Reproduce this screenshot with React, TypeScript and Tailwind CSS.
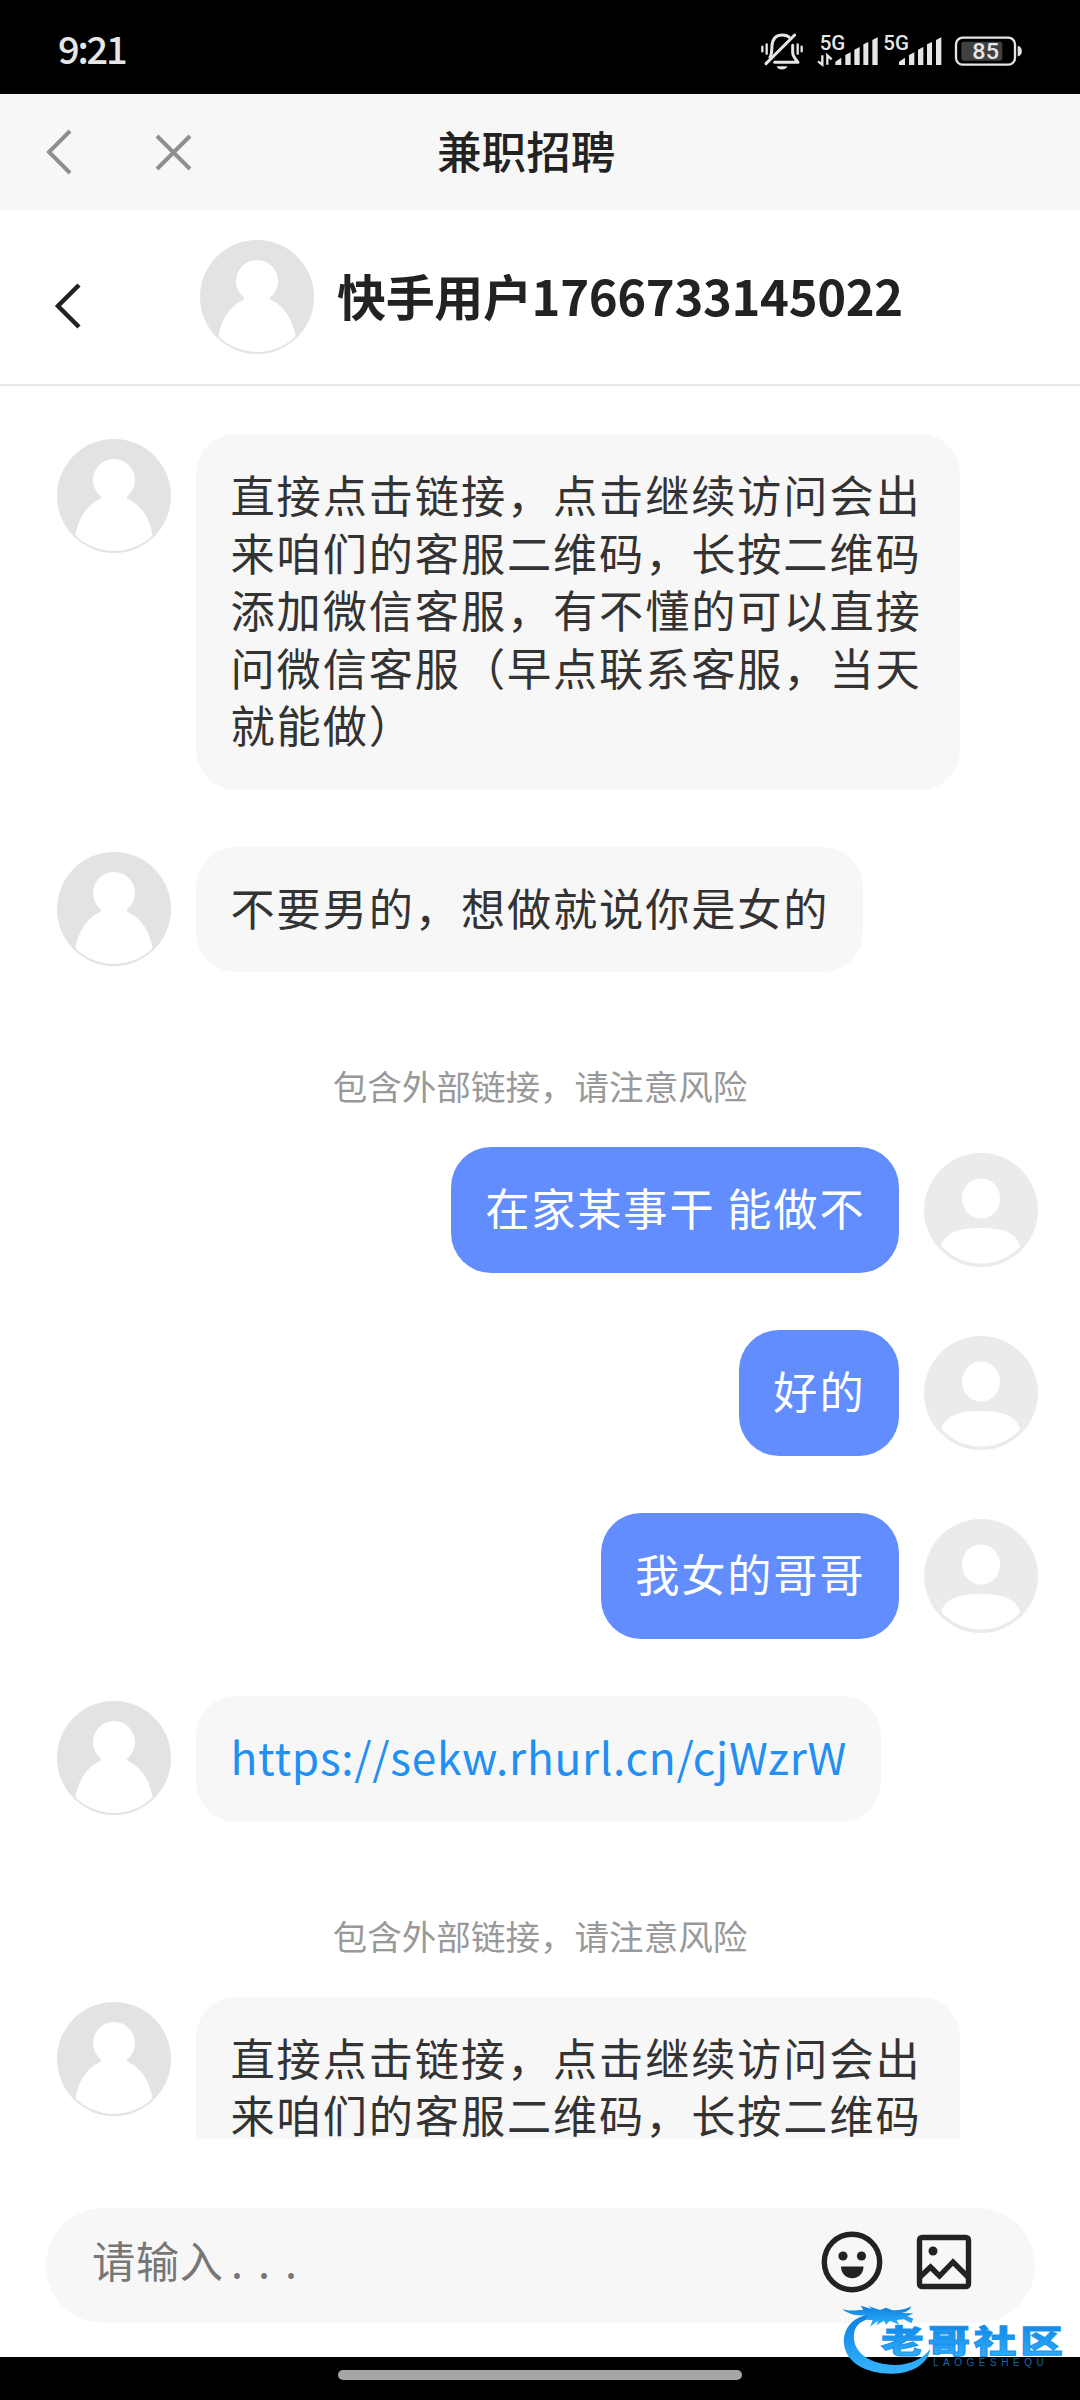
import React from 'react';

type Message =
  | { id: number; kind: 'received'; text: string; link?: boolean }
  | { id: number; kind: 'sent'; text: string }
  | { id: number; kind: 'notice'; text: string };

const LONG_TEXT =
  '直接点击链接，点击继续访问会出来咱们的客服二维码，长按二维码添加微信客服，有不懂的可以直接问微信客服（早点联系客服，当天就能做）';

const messages: Message[] = [
  { id: 1, kind: 'received', text: LONG_TEXT },
  { id: 2, kind: 'received', text: '不要男的，想做就说你是女的' },
  { id: 3, kind: 'notice', text: '包含外部链接，请注意风险' },
  { id: 4, kind: 'sent', text: '在家某事干 能做不' },
  { id: 5, kind: 'sent', text: '好的' },
  { id: 6, kind: 'sent', text: '我女的哥哥' },
  { id: 7, kind: 'received', text: 'https://sekw.rhurl.cn/cjWzrW', link: true },
  { id: 8, kind: 'notice', text: '包含外部链接，请注意风险' },
  { id: 9, kind: 'received', text: LONG_TEXT },
];

const PeerAvatar = () => (
  <svg className="h-[114px] w-[114px] shrink-0" viewBox="0 0 114 114">
    <clipPath id="peer">
      <circle cx="57" cy="57" r="55" />
    </clipPath>
    <circle cx="57" cy="57" r="57" fill="#e3e3e3" />
    <g clipPath="url(#peer)" fill="#fff">
      <circle cx="57" cy="41" r="21" />
      <path d="M43 56 Q45 59 43 60 C30 66 21 79 18 98 V114 H96 V98 C93 79 84 66 71 60 Q69 59 71 56 Z" />
    </g>
  </svg>
);

const SelfAvatar = () => (
  <svg className="h-[114px] w-[114px] shrink-0" viewBox="0 0 114 114">
    <clipPath id="self">
      <circle cx="57" cy="57" r="53.5" />
    </clipPath>
    <circle cx="57" cy="57" r="57" fill="#ebebeb" />
    <g clipPath="url(#self)" fill="#fff">
      <ellipse cx="57" cy="45.5" rx="19" ry="20" />
      <path d="M17 93 C21 80 34 75 57 75 C80 75 92 80 96 93 V114 H17 Z" />
    </g>
  </svg>
);

const SignalBars = ({ x }: { x: number }) => (
  <g fill="#e6e6e6">
    <path d={`M${x} 165 V155 L${x + 18} 143 V165 Z`} />
    <path d={`M${x + 30} 165 V135 L${x + 46} 127 V165 Z`} />
    <path d={`M${x + 57} 165 V119 L${x + 73} 111 V165 Z`} />
    <path d={`M${x + 84} 165 V103 L${x + 99} 96 V165 Z`} />
    <path d={`M${x + 111} 165 V90 L${x + 127} 82 V165 Z`} />
  </g>
);

const StatusIcons = () => (
  <svg className="h-[90px] w-[340px]" viewBox="0 0 1020 270">
    <g fill="none" stroke="#e6e6e6" strokeWidth="9" strokeLinecap="round">
      <path d="M78 161 L164 75" />
      <path d="M90 142 C96 132 95 122 96 107 C98 84 109 75 127 75 C136 75 142 77 147 81" />
      <path d="M104 157 H174 C164 146 158 137 158 127 V106" strokeLinejoin="round" />
      <path d="M67 110 V124 M80 103 V131 M173 103 V131 M185 110 V124" strokeWidth="7" />
    </g>
    <path d="M110 169 H142 C138 182 114 182 110 169 Z" fill="#e6e6e6" />
    <g
      fill="#e6e6e6"
      className="font-['Roboto','Noto_Sans_CJK_SC',sans-serif] text-[60px] font-medium"
    >
      <text x="239" y="119" textLength="77" lengthAdjust="spacingAndGlyphs">
        5G
      </text>
      <text x="430" y="119" textLength="77" lengthAdjust="spacingAndGlyphs">
        5G
      </text>
    </g>
    <path
      d="M247 136 V164 L234 154 M262 164 V136 L275 148"
      fill="none"
      stroke="#e6e6e6"
      strokeWidth="7"
    />
    <SignalBars x={286} />
    <SignalBars x={477} />
    <rect x="648" y="83" width="177" height="81" rx="20" fill="none" stroke="#e6e6e6" strokeWidth="7" />
    <rect x="664" y="95" width="123" height="57" rx="8" fill="#404040" />
    <path d="M834 109 C848 109 848 138 834 138 Z" fill="#e6e6e6" stroke="#e6e6e6" strokeWidth="2" />
    <text
      x="697"
      y="148"
      textLength="80"
      lengthAdjust="spacingAndGlyphs"
      fill="#e6e6e6"
      className="font-['Roboto','Noto_Sans_CJK_SC',sans-serif] text-[68px] font-medium"
    >
      85
    </text>
  </svg>
);

const Bubble = ({ message }: { message: Message }) => {
  if (message.kind === 'notice') {
    return (
      <p className="mb-[30px] h-[88px] pt-[27px] text-center text-[34.56px] leading-[58px] text-[#999]">
        {message.text}
      </p>
    );
  }

  if (message.kind === 'sent') {
    return (
      <div className="mb-[57px] flex justify-end gap-[25px] pr-[42px]">
        <div className="h-[126px] rounded-[40px] bg-[#628dff] pt-[32px] pr-[33.5px] pl-[34.5px] text-[44.2px] leading-[57.5px] tracking-[1.88px] whitespace-nowrap text-white">
          {message.text}
        </div>
        <div className="pt-[6px]">
          <SelfAvatar />
        </div>
      </div>
    );
  }

  return (
    <div className="mb-[57px] flex gap-[25px] pl-[57px]">
      <div className="pt-[5px]">
        <PeerAvatar />
      </div>
      <div className="max-w-[764px] rounded-[40px] bg-[#f7f7f7] pt-[32px] pr-[34px] pb-[36px] pl-[34.56px] text-[44.2px] leading-[57.5px] tracking-[1.88px] break-all text-[#333]">
        {message.link ? (
          <a className="block h-[57.5px] tracking-[0.7px] whitespace-nowrap text-[#2290f2]">{message.text}</a>
        ) : (
          message.text
        )}
      </div>
    </div>
  );
};

const Watermark = () => (
  <svg className="absolute top-[2200px] left-[780px] h-[200px] w-[300px]" viewBox="0 0 900 600">
    <defs>
      <linearGradient id="wm" x1="0" y1="0" x2="0" y2="1">
        <stop offset="0" stopColor="#0a7fe0" />
        <stop offset="1" stopColor="#35b4ff" />
      </linearGradient>
    </defs>
    <g fill="url(#wm)">
      <path d="M272 343 C215 350 188 390 192 432 C198 490 262 522 336 521 C400 520 446 488 451 446 C430 476 390 494 345 495 C275 494 224 462 222 415 C220 380 240 358 290 352 Z" />
      <path d="M187 327 C210 335 228 330 250 330 L242 317 L275 327 L266 319 L300 330 L318 323 L338 331 C360 330 380 328 394 318 C390 332 378 336 366 339 L401 340 L382 349 L400 356 L394 370 L372 358 L350 360 L358 374 L330 362 L318 374 L312 362 L290 376 L294 362 L270 380 L278 360 C250 362 262 350 262 344 C235 350 205 343 187 327 Z" />
    </g>
    <g transform="translate(303 460) scale(1.36 1)">
      <text
        x="0"
        y="0"
        textLength="401"
        fill="url(#wm)"
        stroke="#1c94f0"
        strokeWidth="3"
        className="font-['Noto_Sans_CJK_SC',sans-serif] text-[94px] font-black"
      >
        老哥社区
      </text>
    </g>
    <text
      x="459"
      y="499"
      textLength="332"
      lengthAdjust="spacing"
      fill="#1666a3"
      className="font-['Liberation_Sans',sans-serif] text-[30px]"
    >
      LAOGESHEQU
    </text>
  </svg>
);

export default function App() {
  return (
    <div className="relative flex h-[2400px] w-[1080px] flex-col overflow-hidden bg-white font-['Noto_Sans_CJK_SC',sans-serif]">
      <div className="flex h-[94px] shrink-0 items-start justify-between bg-black">
        <span className="pt-[24px] pl-[58px] text-[38px] leading-[48px] font-medium tracking-[-2.2px] text-[#e6e6e6]">
          9:21
        </span>
        <div className="pt-[10px]">
          <StatusIcons />
        </div>
      </div>

      <header className="flex h-[116px] shrink-0 items-center bg-[#f7f7f7]">
        <svg className="h-[116px] w-[437px]" viewBox="0 0 437 116" fill="none" stroke="#8f8f8f" strokeWidth="4">
          <path d="M70 37 L49 58 L70 79" />
          <path d="M157 42 L190 75 M190 42 L157 75" />
        </svg>
        <h1 className="pb-[4px] text-[44.6px] leading-none font-medium text-[#222]">兼职招聘</h1>
      </header>

      <div className="flex h-[176px] shrink-0 items-center border-b-2 border-[#e8e8e8]">
        <svg className="h-[174px] w-[200px] shrink-0" viewBox="0 0 200 174" fill="none" stroke="#222" strokeWidth="4.5">
          <path d="M79 75 L58 96 L79 117" />
        </svg>
        <PeerAvatar />
        <h2 className="pb-[5px] pl-[23px] text-[49px] leading-none font-bold tracking-[-0.35px] whitespace-nowrap text-[#222]">
          快手用户1766733145022
        </h2>
      </div>

      <main className="h-[1753px] shrink-0 overflow-hidden pt-[48px]">
        {messages.map((message) => (
          <Bubble key={message.id} message={message} />
        ))}
      </main>

      <footer className="flex h-[218px] shrink-0 items-start pt-[69px] pl-[46px]">
        <div className="flex h-[115px] w-[989px] items-center rounded-full bg-[#f7f7f7] pl-[46px]">
          <div className="flex w-[729px] pb-[13px] text-[43.2px] leading-[58px] text-[#777]">
            <span className="w-[139px] tracking-[0.7px] whitespace-nowrap">请输入</span>
            <span className="tracking-[15px]">...</span>
          </div>
          <svg className="mt-[-7px] h-[62px] w-[62px]" viewBox="0 0 62 62">
            <circle cx="31" cy="31" r="27.7" fill="none" stroke="#222" strokeWidth="5.4" />
            <circle cx="22" cy="25" r="4.6" fill="#222" />
            <circle cx="40.5" cy="25" r="4.6" fill="#222" />
            <path d="M20 35.5 H42.5 C42.5 51 20 51 20 35.5 Z" fill="#222" />
          </svg>
          <svg className="mt-[-7px] ml-[33px] h-[56px] w-[56px]" viewBox="0 0 56 56" fill="none" stroke="#222">
            <rect x="3.5" y="3.5" width="49" height="49" rx="2.5" strokeWidth="5.4" />
            <circle cx="17" cy="17" r="4.5" fill="#222" stroke="none" />
            <path d="M4 43 L14.5 33 L23.5 42 L37 28 L52 43" strokeWidth="5.4" />
          </svg>
        </div>
      </footer>

      <div className="flex h-[43px] shrink-0 items-start bg-black pt-[13px]">
        <div className="mx-auto h-[10px] w-[404px] rounded-full bg-[#a6a6a6]" />
      </div>

      <Watermark />
    </div>
  );
}
